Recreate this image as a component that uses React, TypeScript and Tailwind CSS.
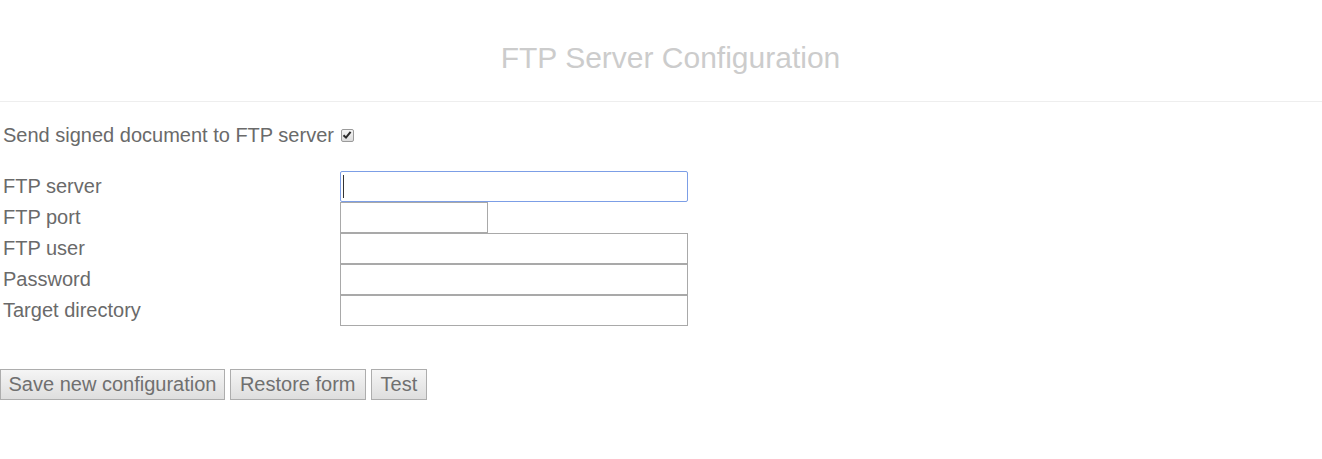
import { useState } from "react";

const fields = [
  { label: "FTP server", width: "w-[348px]", focused: true },
  { label: "FTP port", width: "w-[148px]", focused: false },
  { label: "FTP user", width: "w-[348px]", focused: false },
  { label: "Password", width: "w-[348px]", focused: false, type: "password" },
  { label: "Target directory", width: "w-[348px]", focused: false },
];

const buttons = [
  { text: "Save new configuration", pad: "px-[7.5px]" },
  { text: "Restore form", pad: "px-[9px]" },
  { text: "Test", pad: "px-[9px]" },
];

export default function App() {
  const [send, setSend] = useState(true);

  return (
    <div className="min-h-[459px] bg-white text-[#6a6a6a] font-['Liberation_Sans',Arial,sans-serif]">
      <div className="h-[102px] border-b border-[#eeeeee] pl-[19px] pt-[40px] text-center">
        <h1 className="text-[30px] leading-[36px] text-[#cccccc]">FTP Server Configuration</h1>
      </div>

      <label className="mt-[22px] flex items-center pl-[3px] text-[20px] leading-[23px]">
        Send signed document to FTP server
        <span
          onClick={() => setSend(!send)}
          className="ml-[7px] mt-[-1px] flex h-[13px] w-[13px] items-center justify-center rounded-[2px] border border-[#9a9a9a] bg-gradient-to-b from-[#f4f4f4] to-[#dcdcdc]"
        >
          {send && (
            <svg width="10" height="10" viewBox="0 0 10 10">
              <path d="M1.5 5.2 L4 7.6 L8.6 1.8" fill="none" stroke="#2a2a2a" strokeWidth="2" />
            </svg>
          )}
        </span>
      </label>

      <div className="mt-[24px] flex flex-col">
        {fields.map((f) => (
          <div key={f.label} className="flex h-[31px] items-center">
            <span className="w-[340px] pl-[3px] text-[20px] leading-[23px]">{f.label}</span>
            <div className="relative h-[31px]">
              <input
                type={f.type ?? "text"}
                className={
                  f.focused
                    ? `${f.width} h-[31px] rounded-[2px] border border-[#7c9ee6] bg-white px-[2px] outline-none`
                    : `${f.width} h-[31px] border border-[#a9a9a9] bg-white px-[2px] outline-none`
                }
              />
              {f.focused && <span className="absolute left-[3px] top-[4px] h-[23px] w-px bg-[#333]" />}
            </div>
          </div>
        ))}
      </div>

      <div className="mt-[43px] flex gap-[5px]">
        {buttons.map((b) => (
          <button
            key={b.text}
            className={`h-[31px] border border-[#adadad] bg-gradient-to-b from-[#f5f5f5] to-[#dedede] ${b.pad} text-[20px] leading-[23px] text-[#707070]`}
          >
            {b.text}
          </button>
        ))}
      </div>
    </div>
  );
}
